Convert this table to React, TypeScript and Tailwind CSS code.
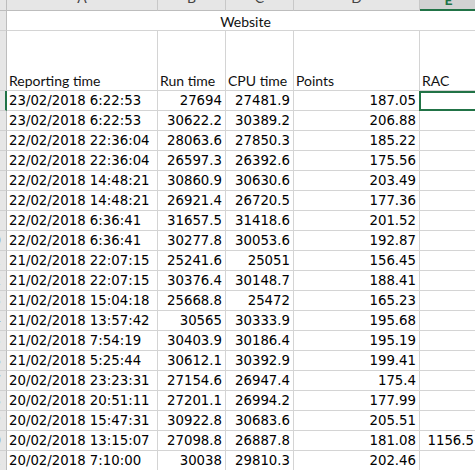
import React from "react";

const rows: [string, string, string, string, string][] = [
  ["23/02/2018 6:22:53", "27694", "27481.9", "187.05", ""],
  ["23/02/2018 6:22:53", "30622.2", "30389.2", "206.88", ""],
  ["22/02/2018 22:36:04", "28063.6", "27850.3", "185.22", ""],
  ["22/02/2018 22:36:04", "26597.3", "26392.6", "175.56", ""],
  ["22/02/2018 14:48:21", "30860.9", "30630.6", "203.49", ""],
  ["22/02/2018 14:48:21", "26921.4", "26720.5", "177.36", ""],
  ["22/02/2018 6:36:41", "31657.5", "31418.6", "201.52", ""],
  ["22/02/2018 6:36:41", "30277.8", "30053.6", "192.87", ""],
  ["21/02/2018 22:07:15", "25241.6", "25051", "156.45", ""],
  ["21/02/2018 22:07:15", "30376.4", "30148.7", "188.41", ""],
  ["21/02/2018 15:04:18", "25668.8", "25472", "165.23", ""],
  ["21/02/2018 13:57:42", "30565", "30333.9", "195.68", ""],
  ["21/02/2018 7:54:19", "30403.9", "30186.4", "195.19", ""],
  ["21/02/2018 5:25:44", "30612.1", "30392.9", "199.41", ""],
  ["20/02/2018 23:23:31", "27154.6", "26947.4", "175.4", ""],
  ["20/02/2018 20:51:11", "27201.1", "26994.2", "177.99", ""],
  ["20/02/2018 15:47:31", "30922.8", "30683.6", "205.51", ""],
  ["20/02/2018 13:15:07", "27098.8", "26887.8", "181.08", "1156.5"],
  ["20/02/2018 7:10:00", "30038", "29810.3", "202.46", ""],
];

const hdrFont = { fontFamily: "Lato, 'Liberation Sans', sans-serif" };
const dataFont = { fontFamily: "'DejaVu Sans', Verdana, sans-serif" };

function RowHead({ n, selected }: { n: number; selected?: boolean }) {
  return (
    <div
      className={`h-full w-[7px] shrink-0 overflow-hidden bg-[#e6e6e6] border-b border-[#d0d0d0] ${
        selected ? "border-r-2 border-r-[#217346]" : "border-r border-r-[#bdbdbd]"
      } relative`}
    >
      <div
        className="absolute right-[-2px] top-0 h-full w-[30px] flex items-center justify-center text-[13px] text-[#666]"
        style={hdrFont}
      >
        {n}
      </div>
    </div>
  );
}

export default function App() {
  const colW = ["w-[151px]", "w-[68px]", "w-[68px]", "w-[126px]", "w-[58px]"];
  return (
    <div className="w-[475px] h-[470px] overflow-hidden bg-white">
      <div className="w-[485px]">
        {/* column header */}
        <div className="flex h-[11px]">
          <div className="w-[7px] shrink-0 bg-[#e6e6e6] border-r border-b border-[#bdbdbd]" />
          {["A", "B", "C", "D", "E"].map((l, i) => (
            <div
              key={l}
              className={`${colW[i]} shrink-0 h-full overflow-hidden flex items-end justify-center ${
                i === 4
                  ? "bg-[#d2d2d2] border-b-2 border-[#217346] text-[#217346] font-bold"
                  : "bg-[#e6e6e6] border-b border-[#bdbdbd] text-[#444]"
              } border-r border-r-[#c8c8c8]`}
              style={hdrFont}
            >
              <span className={`text-[14px] leading-none ${i === 4 ? "mb-[2px]" : "mb-[5px]"}`}>{l}</span>
            </div>
          ))}
        </div>
        {/* Website row */}
        <div className="flex h-[20px]">
          <RowHead n={1} />
          <div
            className="w-[478px] shrink-0 border-b border-r border-[#d4d4d4] flex items-center justify-center text-[14px] text-[#111] pt-[1px]"
            style={hdrFont}
          >
            Website
          </div>
        </div>
        {/* header labels row */}
        <div className="flex h-[60px]">
          <RowHead n={2} />
          {["Reporting time", "Run time", "CPU time", "Points", "RAC"].map((t, i) => (
            <div
              key={t}
              className={`${colW[i]} shrink-0 border-b border-r border-[#d4d4d4] flex items-end pl-[2px] pb-[2px] text-[14px] leading-none text-[#111] whitespace-nowrap`}
              style={hdrFont}
            >
              {t}
            </div>
          ))}
        </div>
        {rows.map((r, ri) => (
          <div key={ri} className="flex h-[20px]">
            <RowHead n={ri + 3} selected={ri === 0} />
            {r.map((c, ci) => (
              <div
                key={ci}
                className={`${colW[ci]} shrink-0 border-b border-r border-[#d4d4d4] flex items-center text-[13.3px] text-black whitespace-nowrap ${
                  ci === 0 ? "pl-[2px]" : "justify-end pr-[3px]"
                } ${ci === 4 && ri === 0 ? "border-2! border-[#217346]! -ml-[1px]" : ""}`}
                style={dataFont}
              >
                {c}
              </div>
            ))}
          </div>
        ))}
      </div>
    </div>
  );
}
